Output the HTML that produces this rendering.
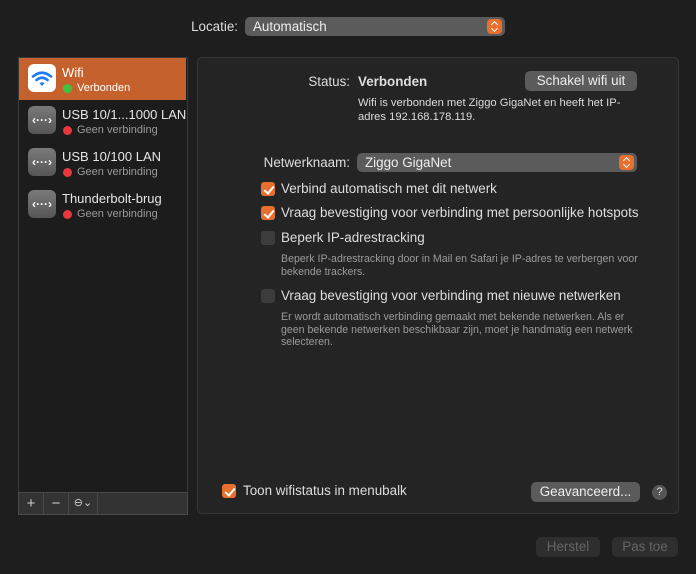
<!DOCTYPE html><html><head><style>
*{box-sizing:border-box;margin:0;padding:0}
body{width:696px;height:574px;background:#1e1e1e;font-family:"Liberation Sans",sans-serif;color:#dedede;font-size:13.4px;position:relative;overflow:hidden}
.a{position:absolute;white-space:nowrap}
.pop{position:absolute;background:#5b5b5b;border-radius:5px;padding-left:8px;line-height:19px;color:#eee;white-space:nowrap}
.arr{position:absolute;right:3px;top:2px;width:15px;height:15px;background:#e8702f;border-radius:4px}
.arr:before,.arr:after{content:"";position:absolute;left:5px;width:4px;height:4px;border:solid #fff;border-width:1.5px 0 0 1.5px}
.arr:before{top:3px;transform:rotate(45deg)}
.arr:after{top:7px;transform:rotate(225deg)}
.cb{position:absolute;width:14px;height:14px;border-radius:3px;background:#e8702f}
.cb:after{content:"";position:absolute;left:4.5px;top:1.5px;width:4px;height:8px;border:solid #fff;border-width:0 2px 2px 0;transform:rotate(40deg)}
.cb.off{background:#3d3d3d}.cb.off:after{display:none}
.sm{font-size:10.6px;color:#9b9b9b;line-height:12.5px}
.btn{position:absolute;background:#5b5b5b;border-radius:5px;text-align:center;line-height:20px;color:#eee;white-space:nowrap}
.row{position:absolute;left:19px;width:167px;height:42px;white-space:nowrap;overflow:hidden}
.ic{position:absolute;left:9px;top:6px;width:28px;height:28px;border-radius:6px;background:linear-gradient(#7a7a7a,#555);color:#fff;font-size:12px;text-align:center;line-height:28px;font-weight:bold}
.nm{position:absolute;left:43px;top:7px;color:#e6e6e6;font-size:13px}
.st{position:absolute;left:58px;top:24px;font-size:11px;color:#9a9a9a}
.dot{position:absolute;left:44px;top:26px;width:9px;height:9px;border-radius:50%;background:#e8383d}
</style></head><body>
<div class="a" style="right:458px;top:19px">Locatie:</div>
<div class="pop" style="left:245px;top:17px;width:260px;height:19px">Automatisch<div class="arr"></div></div>

<div class="a" style="left:18px;top:57px;width:170px;height:458px;background:#1c1c1c;border:1px solid #3a3a3a"></div>
<div class="row" style="top:58px;background:#c5612c">
<div class="ic" style="background:#fff"><svg width="28" height="28" viewBox="0 0 28 28"><g fill="none" stroke="#1f7cf0" stroke-width="2.6" stroke-linecap="round"><path d="M5 12.5Q14 5 23 12.5"/><path d="M8.5 16Q14 11.5 19.5 16"/></g><path d="M11.5 19.2Q14 17.3 16.5 19.2L14 22Z" fill="#1f7cf0"/></svg></div>
<div class="nm" style="color:#fff">Wifi</div><div class="dot" style="background:#3fc23f"></div><div class="st" style="color:#fff">Verbonden</div></div>
<div class="row" style="top:100px"><div class="ic">‹···›</div><div class="nm">USB 10/1...1000 LAN</div><div class="dot"></div><div class="st">Geen verbinding</div></div>
<div class="row" style="top:142px"><div class="ic">‹···›</div><div class="nm">USB 10/100 LAN</div><div class="dot"></div><div class="st">Geen verbinding</div></div>
<div class="row" style="top:184px"><div class="ic">‹···›</div><div class="nm">Thunderbolt-brug</div><div class="dot"></div><div class="st">Geen verbinding</div></div>
<div class="a" style="left:18px;top:492px;width:170px;height:23px;background:#333;border:1px solid #4a4a4a;color:#ccc;font-size:15px;line-height:21px">
<span class="a" style="left:0;width:25px;text-align:center;border-right:1px solid #4a4a4a;height:21px">+</span>
<span class="a" style="left:25px;width:25px;text-align:center;border-right:1px solid #4a4a4a;height:21px">−</span>
<span class="a" style="left:50px;width:29px;text-align:center;border-right:1px solid #4a4a4a;height:21px;font-size:11px">⊖⌄</span></div>

<div class="a" style="left:197px;top:57px;width:482px;height:457px;background:#242424;border:1px solid #363636;border-radius:5px"></div>
<div class="a" style="right:346px;top:74px">Status:</div>
<div class="a" style="left:358px;top:74px;font-weight:bold">Verbonden</div>
<div class="btn" style="left:525px;top:71px;width:112px">Schakel wifi uit</div>
<div class="a" style="left:358px;top:96px;font-size:11.2px;line-height:14px;color:#dcdcdc">Wifi is verbonden met Ziggo GigaNet en heeft het IP-<br>adres 192.168.178.119.</div>
<div class="a" style="right:346px;top:155px">Netwerknaam:</div>
<div class="pop" style="left:357px;top:153px;width:280px;height:19px">Ziggo GigaNet<div class="arr"></div></div>
<div class="cb" style="left:261px;top:182px"></div><div class="a" style="left:281px;top:181px">Verbind automatisch met dit netwerk</div>
<div class="cb" style="left:261px;top:206px"></div><div class="a" style="left:281px;top:205px">Vraag bevestiging voor verbinding met persoonlijke hotspots</div>
<div class="cb off" style="left:261px;top:231px"></div><div class="a" style="left:281px;top:230px">Beperk IP-adrestracking</div>
<div class="a sm" style="left:281px;top:253px">Beperk IP-adrestracking door in Mail en Safari je IP-adres te verbergen voor<br>bekende trackers.</div>
<div class="cb off" style="left:261px;top:289px"></div><div class="a" style="left:281px;top:288px">Vraag bevestiging voor verbinding met nieuwe netwerken</div>
<div class="a sm" style="left:281px;top:311px">Er wordt automatisch verbinding gemaakt met bekende netwerken. Als er<br>geen bekende netwerken beschikbaar zijn, moet je handmatig een netwerk<br>selecteren.</div>
<div class="cb" style="left:222px;top:484px"></div><div class="a" style="left:243px;top:483px">Toon wifistatus in menubalk</div>
<div class="btn" style="left:531px;top:482px;width:109px">Geavanceerd...</div>
<div class="a" style="left:652px;top:485px;width:15px;height:15px;border-radius:50%;background:#555;color:#ddd;font-size:11px;text-align:center;line-height:15px">?</div>
<div class="btn" style="left:536px;top:537px;width:64px;background:#2e2e2e;color:#666">Herstel</div>
<div class="btn" style="left:612px;top:537px;width:66px;background:#2e2e2e;color:#666">Pas toe</div>
</body></html>
